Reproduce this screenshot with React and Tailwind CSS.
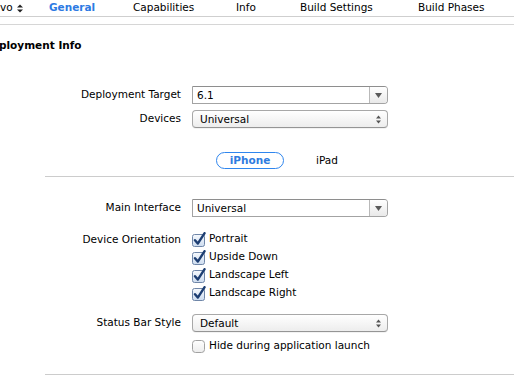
import React from "react";

const font = { fontFamily: '"DejaVu Sans", "Liberation Sans", sans-serif' };

function ComboBox({ value }) {
  return (
    <div className="flex h-[18px] w-[196px] border border-[#a3a3a3] border-t-[#8e8e8e] rounded-r-[4px] bg-white overflow-hidden">
      <div className="flex-1 pl-[4px] leading-[16px] text-black">{value}</div>
      <div className="w-[18px] border-l border-[#b9b9b9] bg-gradient-to-b from-white to-[#e9e9e9] flex items-center justify-center">
        <svg width="7" height="5" viewBox="0 0 7 5">
          <path d="M0 0 L7 0 L3.5 5 Z" fill="#5a5a5a" />
        </svg>
      </div>
    </div>
  );
}

function PopUp({ value }) {
  return (
    <div className="flex items-center h-[18px] w-[196px] border border-[#a8a8a8] border-b-[#959595] rounded-[4px] bg-gradient-to-b from-white to-[#ededed] shadow-[0_1px_0_rgba(0,0,0,0.05)]">
      <div className="flex-1 pl-[7px] leading-[16px] text-black">{value}</div>
      <svg width="5" height="9" viewBox="0 0 5 9" className="mr-[6px]">
        <path d="M0 3.5 L2.5 0.5 L5 3.5 Z" fill="#555" />
        <path d="M0 5.5 L2.5 8.5 L5 5.5 Z" fill="#555" />
      </svg>
    </div>
  );
}

function Checked() {
  return (
    <svg width="15" height="15" viewBox="0 0 15 15" className="shrink-0">
      <defs>
        <linearGradient id="cbg" x1="0" y1="0" x2="0" y2="1">
          <stop offset="0" stopColor="#f6f9fd" />
          <stop offset="1" stopColor="#cddcef" />
        </linearGradient>
      </defs>
      <rect x="0.5" y="2.5" width="12" height="12" rx="2" fill="url(#cbg)" stroke="#6f86a8" />
      <path d="M3 8.2 L5.8 11.6 L12.6 1.2" fill="none" stroke="#1d3e72" strokeWidth="2.4" strokeLinecap="round" strokeLinejoin="round" />
    </svg>
  );
}

function Unchecked() {
  return (
    <svg width="15" height="15" viewBox="0 0 15 15" className="shrink-0">
      <defs>
        <linearGradient id="ucb" x1="0" y1="0" x2="0" y2="1">
          <stop offset="0" stopColor="#ffffff" />
          <stop offset="1" stopColor="#ececec" />
        </linearGradient>
      </defs>
      <rect x="0.5" y="1.5" width="12" height="12" rx="3" fill="url(#ucb)" stroke="#a1a1a1" />
    </svg>
  );
}

function Row({ label, children, className = "" }) {
  return (
    <div className={"flex items-center " + className}>
      <div className="w-[182px] text-right pr-[1px] text-black">{label}</div>
      <div className="ml-[10px]">{children}</div>
    </div>
  );
}

function CheckRow({ children, checked = true }) {
  return (
    <div className="flex items-center h-[18px]">
      {checked ? <Checked /> : <Unchecked />}
      <span className="ml-[2px] text-black">{children}</span>
    </div>
  );
}

export default function App() {
  return (
    <div className="w-[514px] h-[381px] bg-white overflow-hidden text-[10.5px]" style={font}>
      {/* tab bar */}
      <div className="flex h-[17px] items-center border-b border-[#cfcfcf] text-[10.5px] text-black">
        <div className="w-[49px] flex items-center">
          <span>vo</span>
          <svg width="6" height="9" viewBox="0 0 6 9" className="ml-[4px]">
            <path d="M0 3.5 L3 0.5 L6 3.5 Z" fill="#222" />
            <path d="M0 5.5 L3 8.5 L6 5.5 Z" fill="#222" />
          </svg>
        </div>
        <div className="w-[84px] font-bold text-[#2d7ae3]">General</div>
        <div className="w-[103px]">Capabilities</div>
        <div className="w-[64px]">Info</div>
        <div className="w-[118px]">Build Settings</div>
        <div>Build Phases</div>
      </div>
      <div className="h-[8px] border-b border-[#d6d6d6]" />

      <div className="mt-[14px] font-bold text-black text-[10.5px] leading-[12px] -ml-[1px]">ployment Info</div>

      <Row label="Deployment Target" className="mt-[35px]">
        <ComboBox value="6.1" />
      </Row>
      <Row label="Devices" className="mt-[6px]">
        <PopUp value="Universal" />
      </Row>

      <div className="mt-[24px] flex items-center h-[17px]">
        <div className="ml-[216px] w-[68px] h-[17px] rounded-full border border-[#2f86ee] text-[#2f7ce0] font-bold flex items-center justify-center">
          iPhone
        </div>
        <div className="ml-[32px] text-black">iPad</div>
      </div>

      <div className="mt-[7px] ml-[45px] border-t border-[#cccccc]" />

      <Row label="Main Interface" className="mt-[22px]">
        <ComboBox value="Universal" />
      </Row>

      <div className="mt-[13px] flex items-start">
        <div className="w-[182px] text-right pr-[1px] h-[18px] leading-[18px] text-black">Device Orientation</div>
        <div className="ml-[10px] flex flex-col">
          <CheckRow>Portrait</CheckRow>
          <CheckRow>Upside Down</CheckRow>
          <CheckRow>Landscape Left</CheckRow>
          <CheckRow>Landscape Right</CheckRow>
        </div>
      </div>

      <Row label="Status Bar Style" className="mt-[12px]">
        <PopUp value="Default" />
      </Row>
      <div className="mt-[5px] ml-[192px]">
        <CheckRow checked={false}>Hide during application launch</CheckRow>
      </div>

      <div className="mt-[19px] ml-[45px] border-t border-[#cccccc]" />
    </div>
  );
}
